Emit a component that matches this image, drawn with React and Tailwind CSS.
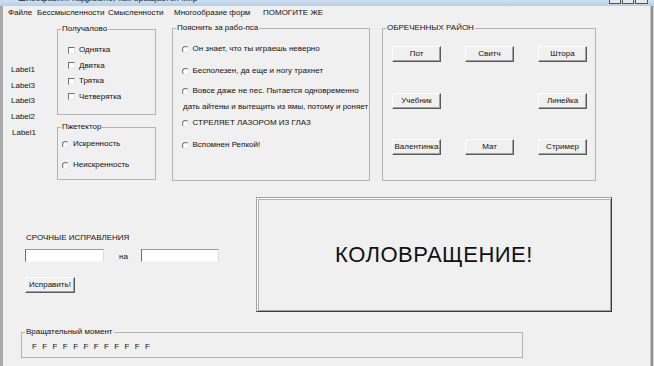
import React from 'react'

// WinForms-like form, classic 3D controls
const FONT = "font-['Liberation_Sans',Arial,sans-serif]"

function Group({ title, className = '', children }) {
  return (
    <div className={`relative border border-[#b4b4b4] ${className}`}>
      <span className="absolute -top-[6px] left-[3px] bg-[#f0f0f0] px-px text-[8px] leading-[10px] whitespace-nowrap">
        {title}
      </span>
      {children}
    </div>
  )
}

function CheckRow({ label }) {
  return (
    <div className="flex h-[12px] items-center gap-[4px]">
      <span className="h-[7px] w-[7px] border border-t-[#6f6f6f] border-l-[#6f6f6f] border-r-[#e6e6e6] border-b-[#e6e6e6] bg-white" />
      <span className="text-[8px] leading-[12px] whitespace-nowrap">{label}</span>
    </div>
  )
}

function RadioRow({ label, className = '' }) {
  return (
    <div className={`flex h-[12px] items-center gap-[4px] ${className}`}>
      <span className="h-[7px] w-[7px] rounded-full border border-t-[#6f6f6f] border-l-[#6f6f6f] border-r-[#e6e6e6] border-b-[#e6e6e6] bg-white" />
      <span className="text-[8px] leading-[12px] whitespace-nowrap">{label}</span>
    </div>
  )
}

function Btn({ children, className = '' }) {
  return (
    <div
      className={`flex h-[16px] items-center justify-center border border-t-white border-l-white border-b-[#5a5a5a] border-r-[#5a5a5a] bg-[#f0f0f0] text-[8px] leading-none shadow-[inset_-1px_-1px_0_#a0a0a0] whitespace-nowrap ${className}`}
    >
      {children}
    </div>
  )
}

function TextBox({ className = '' }) {
  return (
    <div className={`h-[13px] border border-t-[#9a9a9a] border-l-[#6f6f6f] border-b-[#f8f8f8] border-r-[#dcdcdc] bg-white ${className}`} />
  )
}

const menu = [
  ['Файле', 'w-[29px]'],
  ['Бессмысленности', 'w-[71px]'],
  ['Смысленности', 'w-[66px]'],
  ['Многообразие форм', 'w-[89px]'],
  ['ПОМОГИТЕ ЖЕ', 'w-[80px]'],
]

export default function App() {
  return (
    <div className={`flex h-[366px] w-[654px] flex-col overflow-hidden bg-[#f0f0f0] text-[#111] ${FONT}`}>
      {/* title bar, cut off at the top */}
      <div className="flex h-[6px] shrink-0 items-start overflow-hidden bg-gradient-to-b from-[#cfe0f3] to-[#b8cfe8]">
        <span className="-mt-[8px] ml-[18px] text-[9px] leading-[13px] text-[#333]">
          Шизофазия: надрывно, как вращается мир
        </span>
        <div className="ml-auto mr-[6px] flex gap-[1px]">
          <span className="h-[4px] w-[12px] border border-t-0 border-[#555] bg-[#e9e9e9]" />
          <span className="h-[4px] w-[12px] border border-t-0 border-[#555] bg-[#e9e9e9]" />
          <span className="h-[4px] w-[13px] border border-t-0 border-[#555] bg-[#e9e9e9]" />
        </div>
      </div>

      <div className="flex flex-1">
        <div className="w-[3px] shrink-0 bg-[#a9a9a9]" />

        <div className="flex w-[647px] flex-col">
          {/* menu strip */}
          <div className="flex h-[14px] items-center pl-[5px] text-[8px] leading-none">
            {menu.map(([t, w]) => (
              <span key={t} className={`${w} shrink-0 whitespace-nowrap`}>
                {t}
              </span>
            ))}
          </div>

          {/* top row of groups */}
          <div className="mt-[8px] flex items-start">
            <div className="flex w-[54px] shrink-0 flex-col gap-[3.5px] pl-[8px] pt-[36px] text-[8px] leading-[12px]">
              <span>Label1</span>
              <span>Label3</span>
              <span>Label3</span>
              <span>Label2</span>
              <span className="mt-[1px] pl-px">Label1</span>
            </div>

            <div className="flex w-[99px] shrink-0 flex-col">
              <Group title="Получалово" className="mt-[1px] h-[86px]">
                <div className="flex flex-col gap-[3.5px] pl-[10px] pt-[14px]">
                  <CheckRow label="Однятка" />
                  <CheckRow label="Двятка" />
                  <CheckRow label="Трятка" />
                  <CheckRow label="Четверятка" />
                </div>
              </Group>
              <Group title="Пжетектор" className="mt-[12px] h-[53px]">
                <div className="flex flex-col gap-[9px] pl-[4px] pt-[10px]">
                  <RadioRow label="Искренность" />
                  <RadioRow label="Неискренность" />
                </div>
              </Group>
            </div>

            <Group title="Пояснить за рабо-пса" className="ml-[16px] h-[153px] w-[198px] shrink-0">
              <div className="flex flex-col pl-[8.5px] pt-[14px]">
                <RadioRow label="Он знает, что ты играешь неверно" />
                <RadioRow label="Бесполезен, да еще и ногу трахнет" className="mt-[10px]" />
                <RadioRow label="Вовсе даже не пес. Пытается одновременно" className="mt-[8px]" />
                <span className="mt-[4px] ml-[1.5px] text-[8px] leading-[12px] whitespace-nowrap">
                  дать айтены и вытещить из ямы, потому и роняет
                </span>
                <RadioRow label="СТРЕЛЯЕТ ЛАЗОРОМ ИЗ ГЛАЗ" className="mt-[4px]" />
                <RadioRow label="Вспомнен Репкой!" className="mt-[10px]" />
              </div>
            </Group>

            <Group title="ОБРЕЧЕННЫХ РАЙОН" className="ml-[12px] h-[153px] w-[214px] shrink-0">
              <div className="grid grid-cols-[49px_49px_49px] gap-x-[24px] gap-y-[30.5px] pl-[9px] pt-[17px]">
                <Btn>Пот</Btn>
                <Btn>Свитч</Btn>
                <Btn>Штора</Btn>
                <Btn>Учебник</Btn>
                <div />
                <Btn>Линейка</Btn>
                <Btn>Валентинка</Btn>
                <Btn>Мат</Btn>
                <Btn>Стример</Btn>
              </div>
            </Group>
          </div>

          {/* corrections + big label */}
          <div className="mt-[16px] flex items-start">
            <div className="flex w-[253px] shrink-0 flex-col pl-[22px] pt-[35px]">
              <span className="pl-px text-[8px] leading-[12px] whitespace-nowrap">СРОЧНЫЕ ИСПРАВЛЕНИЯ</span>
              <div className="mt-[5px] flex items-start">
                <TextBox className="w-[79px]" />
                <span className="w-[37px] pl-[15px] pt-[2px] text-[8px] leading-[12px]">на</span>
                <TextBox className="w-[78px]" />
              </div>
              <Btn className="mt-[14px] w-[50px]">Исправить!</Btn>
            </div>

            <div className="flex h-[115px] w-[356px] shrink-0 items-center justify-center border border-t-[#a0a0a0] border-l-[#a0a0a0] border-b-[#3c3c3c] border-r-[#3c3c3c] shadow-[inset_1px_1px_0_#fff,inset_2px_2px_0_#b0b0b0,inset_-1px_-1px_0_#a0a0a0]">
              <span className="text-[22px] leading-none tracking-[0.5px] text-[#111]">КОЛОВРАЩЕНИЕ!</span>
            </div>
          </div>

          {/* bottom group */}
          <Group title="Вращательный момент" className="ml-[18px] mt-[20px] h-[26px] w-[502px]">
            <div className="flex gap-[5.4px] pl-[10px] pt-[8px] text-[8px] leading-[12px]">
              {Array.from({ length: 12 }).map((_, i) => (
                <span key={i}>F</span>
              ))}
            </div>
          </Group>
        </div>

        <div className="flex w-[4px] shrink-0">
          <div className="w-[1px] bg-[#c8c8c8]" />
          <div className="w-[2px] bg-[#8f8f8f]" />
          <div className="w-[1px] bg-[#d8d8d8]" />
        </div>
      </div>
    </div>
  )
}
